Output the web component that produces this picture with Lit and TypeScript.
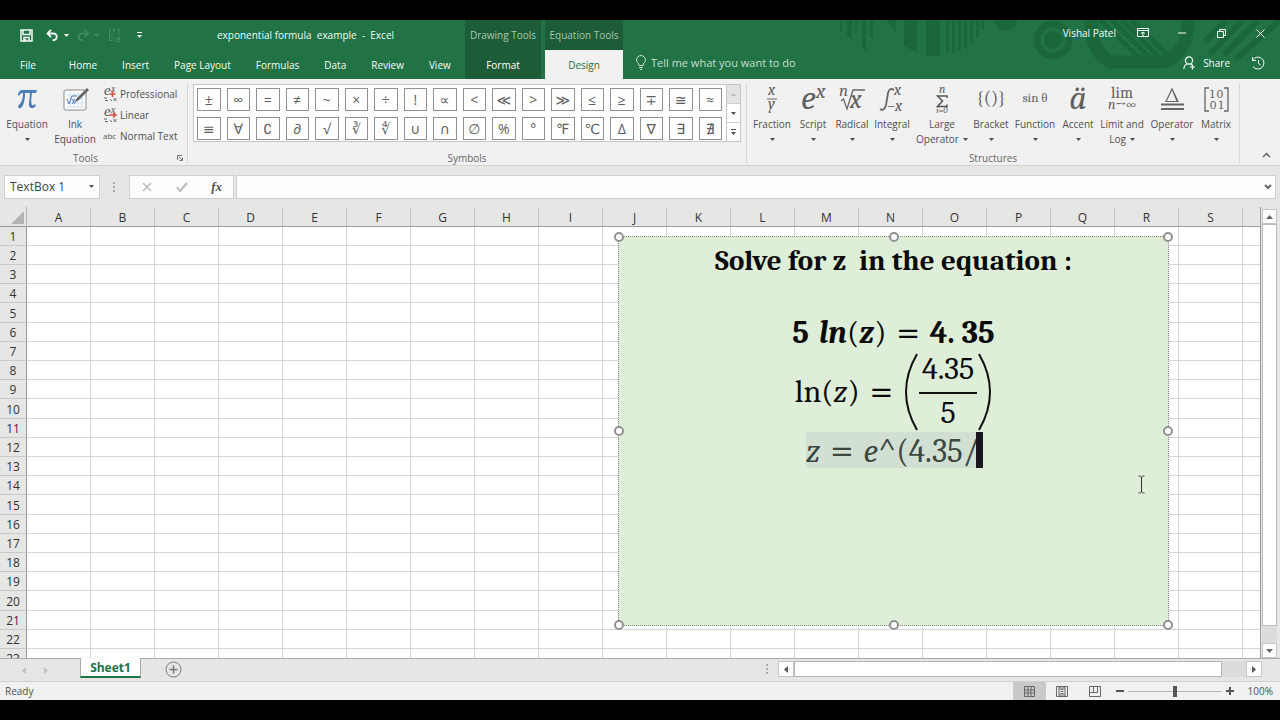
import { LitElement, html, svg, css } from "lit";
import { customElement } from "lit/decorators.js";

const SYMBOLS = [
  "±", "∞", "=", "≠", "~", "×", "÷", "!", "∝", "<", "≪", ">", "≫", "≤", "≥", "∓", "≅", "≈",
  "≡", "∀", "∁", "∂", "√", "∛", "∜", "∪", "∩", "∅", "%", "°", "℉", "℃", "∆", "∇", "∃", "∄",
];
const COLUMNS = "ABCDEFGHIJKLMNOPQRS".split("");
const ROWS = Array.from({ length: 23 }, (_, i) => i + 1);
const TABS = ["Home", "Insert", "Page Layout", "Formulas", "Data", "Review", "View"];

const down = html`<svg class="caret" width="5" height="3" viewBox="0 0 5 3" aria-hidden="true"><path d="M0 0h5L2.500 3z" fill="currentColor" /></svg>`;

@customElement("title-area")
export class TitleArea extends LitElement {
  static styles = css`
    :host { display: flex; position: relative; height: 59px; background: #217346; color: #f3faf5; overflow: hidden; }
    button, a { font: inherit; color: inherit; background: none; border: 0; padding: 0; text-decoration: none; display: flex; align-items: center; }
    .pattern { position: absolute; right: 0; top: 0; }
    .left { width: 465px; display: flex; flex-direction: column; }
    .row { display: flex; align-items: center; height: 30px; }
    .quick { width: 217px; padding-left: 20px; box-sizing: border-box; gap: 8px; }
    .save { margin-right: 5px; }
    .custom { margin-left: 7px; }
    .dim { color: #468b64; }
    .title { white-space: pre; }
    .tabs { height: 29px; gap: 25px; padding-left: 20px; white-space: nowrap; }
    .file { margin-right: 8px; }
    .context { display: flex; flex-direction: column; width: 76px; margin-right: 4px; background: #1d5c38; }
    .equation { width: 78px; margin-right: 0; }
    .caption { height: 30px; line-height: 30px; text-align: center; color: #a5c9b3; white-space: nowrap; }
    .tab { flex: 1; justify-content: center; color: #fff; }
    .active { background: #f1f1f1; color: #217346; }
    .right { flex: 1; display: flex; flex-direction: column; position: relative; }
    .end { justify-content: flex-end; height: 27px; }
    .user { margin-right: 21px; }
    .win { width: 12px; justify-content: center; margin-right: 27px; }
    .last { margin-right: 14px; }
    .second { display: flex; align-items: center; height: 34px; padding-left: 12px; }
    .tell { gap: 4px; font-size: 11px; color: #c4dfcf; }
    .share { margin-left: auto; gap: 7px; margin-right: 21px; }
    .history { margin-right: 15px; }
  `;
  render() {
    return html`
      <svg class="pattern" width="440" height="59" viewBox="0 0 440 59" aria-hidden="true">
        <g fill="#1b663b">
          <path d="M0 0h2v12h-2zM7 0h5v20l-5-4zM15 0h2v14h-2zM22 0h4v31l-4-3zM30 0h3v18h-3zM47 0h9v13z" />
          <path d="M64 0h13v32l-13-6zM86 0h14v36h-14z" />
          <path d="M106 0h3v34h-3zM112 0h3v33h-3zM118 0h3v31h-3zM124 0h3v28h-3zM130 0h3v24h-3zM136 0h3v18h-3zM142 0h2v10h-2z" />
          <circle cx="166" cy="0" r="11" /><circle cx="213" cy="20" r="9" />
        </g>
        <g fill="none" stroke="#1b663b">
          <circle cx="213" cy="20" r="16" stroke-width="7" />
          <path d="M251 0C250 22 259 36 270 42H325C342 34 349 20 348 0" stroke-width="13" />
          <path d="M260 0L304 42M272 0L314 42M282 0L324 42M291 0L333 40" stroke-width="5" />
          <path d="M386 0L365 22M403 0L370 34M418 0L384 35M440 0L395 40" stroke-width="6" />
        </g>
      </svg>
      <div class="left">
        <div class="row">
          <div class="row quick">
            <button class="save" aria-label="Save"><svg width="13" height="13" viewBox="0 0 13 13" fill="none" stroke="currentColor" stroke-width="1.500"><path d="M1 1h11v11H1zM3 1v4.500h7V1M4 12V8.500h5V12M5.500 12v-2" /></svg></button>
            <button aria-label="Undo"><svg width="23" height="13" viewBox="0 0 23 13"><path d="M1.500 4.500H7.500a3.300 3.300 0 0 1 0 6.600H6.500M5 .8L1.500 4.500 5 8.200" fill="none" stroke="currentColor" stroke-width="1.800" /><path d="M18 5h5l-2.500 3z" fill="currentColor" /></svg></button>
            <button class="dim" aria-label="Redo"><svg width="23" height="13" viewBox="0 0 23 13"><path d="M11 4.500H5a3.300 3.300 0 0 0 0 6.600H6M7.500.8L11 4.500 7.500 8.200" fill="none" stroke="currentColor" stroke-width="1.600" /><path d="M17 5h5l-2.500 3z" fill="currentColor" /></svg></button>
            <button class="dim" aria-label="Calculate"><svg width="14" height="15" viewBox="0 0 14 15" fill="none" stroke="currentColor"><path d="M4 12.500H1.500V1.500H3M5 3V1h2v2zM9 1.500h2V7M4 5v5M6 9.500v4M8.500 9.500h3v2h-3v2h3.500" /></svg></button>
            <button class="custom" aria-label="Customize toolbar"><svg width="5" height="6" viewBox="0 0 5 6" fill="currentColor"><path d="M0 0h5v1H0zM0 3h5L2.500 6z" /></svg></button>
          </div>
          <div class="title">exponential formula  example  -  Excel</div>
        </div>
        <nav class="row tabs"><a class="file" href="#file">File</a>${TABS.map((t) => html`<a href="#${t}">${t}</a>`)}</nav>
      </div>
      <div class="context"><div class="caption">Drawing Tools</div><a class="tab" href="#format">Format</a></div>
      <div class="context equation"><div class="caption">Equation Tools</div><a class="tab active" href="#design">Design</a></div>
      <div class="right">
        <div class="row end">
          <span class="user">Vishal Patel</span>
          <button class="win" aria-label="Ribbon options"><svg width="12" height="10" viewBox="0 0 12 10" fill="none" stroke="currentColor"><path d="M.5.5h11v8H.5zM.5 2.500h11M6 8V4M4 5.500L6 4l2 1.500" /></svg></button>
          <button class="win" aria-label="Minimize"><svg width="8" height="2"><path d="M0 1h8" stroke="currentColor" /></svg></button>
          <button class="win" aria-label="Restore"><svg width="9" height="9" viewBox="0 0 9 9" fill="none" stroke="currentColor"><path d="M.5 2.500h6v6h-6zM2.500 2.500v-2h6v6h-2" /></svg></button>
          <button class="win last" aria-label="Close"><svg width="9" height="9" viewBox="0 0 9 9"><path d="M.5.5l8 8M8.500.5l-8 8" stroke="currentColor" /></svg></button>
        </div>
        <div class="second">
          <button class="tell"><svg width="12" height="15" viewBox="0 0 12 15" fill="none" stroke="currentColor"><path d="M4 10.500C4 8 1.500 7.500 1.500 5a4.500 4.500 0 0 1 9 0C10.500 7.500 8 8 8 10.500zM4 12.500h4M5 14.500h2" /></svg>Tell me what you want to do</button>
          <button class="share"><svg width="13" height="14" viewBox="0 0 13 14" fill="none" stroke="currentColor" stroke-width="1.200"><circle cx="6" cy="4.500" r="3.600" /><path d="M.8 13c.3-3 2-5 4-5M7 8c1 0 1.500.5 2 1M9.500 8.500v5M7 11h5" /></svg>Share</button>
          <button class="history" aria-label="History"><svg width="14" height="14" viewBox="0 0 14 14" fill="none" stroke="currentColor"><path d="M1.500 4.500A6 6 0 1 1 2 10.500M1.500 1v3.500H5M7.500 4v3.500L9.500 9" /></svg></button>
        </div>
      </div>`;
  }
}

const STRUCTURES: { label: string; width: number; second?: string; icon: unknown }[] = [
  { label: "Fraction", width: 44, icon: svg`<text x="16" y="11" font-size="16">x</text><path d="M15 15h10" stroke="#666" /><text x="16" y="25" font-size="16">y</text>` },
  { label: "Script", width: 38, icon: svg`<text x="8" y="25" font-size="34">e</text><text x="23" y="14" font-size="21">x</text>` },
  { label: "Radical", width: 40, icon: svg`<text x="7" y="12" font-size="17">n</text><path d="M9 17l2.500-2 3.500 10L21 6h12" fill="none" stroke="#666" stroke-width="1.300" /><text x="18" y="24" font-size="26">x</text>` },
  { label: "Integral", width: 40, icon: svg`<path d="M8 25c3 2 5 0 6-4l2-12c1-4 3-5 6-3" fill="none" stroke="#666" stroke-width="1.800" /><text x="22" y="11" font-size="16">x</text><text x="15" y="27" font-size="16">−x</text>` },
  { label: "Large", second: "Operator", width: 60, icon: svg`<text x="17" y="9" font-size="12">n</text><path d="M25 14v-2H15.500l5 5-5 5.500H25v-2" fill="none" stroke="#555" stroke-width="1.500" /><text x="20" y="29" font-size="9" text-anchor="middle">i=0</text>` },
  { label: "Bracket", width: 38, icon: svg`<text class="up" x="20" y="20" font-size="19" text-anchor="middle">{()}</text>` },
  { label: "Function", width: 50, icon: svg`<text class="up" x="20" y="18" font-size="13" text-anchor="middle">sin θ</text>` },
  { label: "Accent", width: 36, icon: svg`<text x="20" y="25" font-size="34" text-anchor="middle">ä</text>` },
  { label: "Limit and", second: "Log", width: 52, icon: svg`<text class="up" x="20" y="14" font-size="16" text-anchor="middle">lim</text><text x="20" y="25" font-size="14" text-anchor="middle">n→∞</text>` },
  { label: "Operator", width: 48, icon: svg`<path d="M14 17.500L20 5l6 12.500zM20 5l5 12" fill="none" stroke="#666" stroke-width="1.200" /><path d="M9 20.500h23M9 25h23" stroke="#666" stroke-width="2" />` },
  { label: "Matrix", width: 40, icon: svg`<path d="M13 4H9v23h4M28 4h4v23h-4" fill="none" stroke="#666" stroke-width="1.300" /><text class="up" x="20.500" y="14" font-size="12" text-anchor="middle">1 0</text><text class="up" x="20.500" y="25" font-size="12" text-anchor="middle">0 1</text>` },
];

@customElement("ribbon-area")
export class RibbonArea extends LitElement {
  static styles = css`
    :host { display: flex; height: 86px; background: #f1f1f1; border-bottom: 1px solid #d4d4d2; color: #505050; }
    button { font: inherit; color: inherit; background: none; border: 0; padding: 0; }
    .group { display: flex; flex-direction: column; border-right: 1px solid #dadada; margin-top: 4px; height: 81px; box-sizing: border-box; position: relative; }
    .body { display: flex; height: 67px; }
    .name { text-align: center; line-height: 16px; height: 14px; color: #666; }
    .tools { width: 188px; }
    .tools .name { padding-right: 16px; }
    .launcher { position: absolute; right: 4px; bottom: 3px; display: flex; }
    .big { display: flex; flex-direction: column; align-items: center; line-height: 15px; white-space: nowrap; flex: none; }
    .art { height: 34px; width: 40px; padding-top: 1px; box-sizing: border-box; display: block; overflow: visible; }
    .big text { font-family: Cambria, "Liberation Serif", serif; font-style: italic; fill: #606060; }
    .big .up { font-style: normal; }
    .line { height: 15px; display: flex; align-items: center; justify-content: center; gap: 4px; }
    .lone { width: 54px; }
    .ink { width: 42px; }
    .small { display: flex; flex-direction: column; margin-left: 7px; }
    .small button { display: flex; align-items: center; height: 21px; gap: 3px; white-space: nowrap; }
    .small svg { overflow: visible; }
    .small text { font-family: "Liberation Serif", serif; font-style: italic; fill: #555; }
    .small .abc { font-family: "Open Sans", sans-serif; font-style: normal; }
    .symbols { width: 559px; }
    .gallery { flex: 1; display: flex; margin: 1px 5px 0 5px; height: 58px; border: 1px solid #c6c6c6; background: #fff; box-sizing: border-box; }
    .cells { flex: 1; display: grid; grid-template-columns: repeat(18, 1fr); gap: 6px; padding: 3px 4px 3px 3px; }
    .cells button { border: 1px solid #919191; color: #606060; font: 14px/20px "Open Sans", "DejaVu Sans", sans-serif; height: 23px; min-width: 0; text-align: center; }
    .scroll { width: 13px; display: flex; flex-direction: column; border-left: 1px solid #c6c6c6; }
    .scroll button { flex: 1; display: flex; align-items: center; justify-content: center; border-bottom: 1px solid #d0d0d0; }
    .scroll button:first-child { background: #e3e3e3; color: #bbb; }
    .scroll button:last-child { border-bottom: 0; }
    .structures { width: 493px; }
    .structures .body { padding-left: 3px; }
    .collapse { margin-left: auto; align-self: flex-end; padding: 0 9px 3px 0; }
  `;
  render() {
    const small = (red: string) => html`<svg width="14" height="16" viewBox="0 0 14 16"><text x="1" y="9" font-size="15">e</text><text x="8" y="6" font-size="10">x</text><path d="M1 12h3M2 14.500h3M7 13l2 2M10.500 12l3 3M13.500 12l-3 3" stroke="#666" fill="none" /><path d=${red} stroke="#d64f45" stroke-width="1.500" fill="none" /></svg>`;
    return html`
      <section class="group tools">
        <div class="body">
          <button class="big lone"><svg class="art" viewBox="0 0 40 33"><path d="M11 11c1-5 3-5 5-5h14l-1 3h-4c-1 6-1 10 0 12 1 1 2 0 3-1l1 1c-2 5-8 4-7-2l1-10h-5c0 7-1 12-4 15-2 1-4-1-2-3 3-3 4-7 4-12-2 0-3 1-4 3z" fill="#4b7fb8" /></svg><span class="line">Equation</span><span class="line">${down}</span></button>
          <button class="big ink"><svg class="art" viewBox="0 0 40 33"><rect x="9" y="6" width="22" height="20" rx="2" fill="#fff" stroke="#888" /><path d="M12 11h17M12 15h17M12 19h17M12 23h17M15 8v16M19 8v16M23 8v16M27 8v16" stroke="#cfdfec" /><path d="M12 15l2 5 3-8h5M17 15l3 5M20 15l-3 5" fill="none" stroke="#4b7fb8" /><path d="M19 19l3-5L32 4l2 2-10 10z" fill="#666" /></svg><span class="line">Ink</span><span class="line">Equation</span></button>
          <div class="small">
            <button>${small("M6.500 8h6M9.500 5v6")}Professional</button>
            <button>${small("M6 8h7M10 5.500l3 2.500-3 2.500")}Linear</button>
            <button><svg width="14" height="12" viewBox="0 0 14 12"><text class="abc" x="0" y="9" font-size="8">abc</text></svg>Normal Text</button>
          </div>
        </div>
        <div class="name">Tools</div>
        <button class="launcher" aria-label="Tools options"><svg width="6" height="6" viewBox="0 0 6 6" fill="none" stroke="#777"><path d="M.5 5V.5H5M2 2l3 3M5.500 2.500v3h-3" /></svg></button>
      </section>
      <section class="group symbols">
        <div class="body"><div class="gallery">
          <div class="cells">${SYMBOLS.map((s) => html`<button>${s}</button>`)}</div>
          <div class="scroll">
            <button aria-label="Up"><svg width="5" height="3"><path d="M0 3h5L2.500 0z" fill="currentColor" /></svg></button>
            <button aria-label="Down">${down}</button>
            <button aria-label="More"><svg width="5" height="6"><path d="M0 0h5v1H0zM0 3h5L2.500 6z" fill="currentColor" /></svg></button>
          </div>
        </div></div>
        <div class="name">Symbols</div>
      </section>
      <section class="group structures">
        <div class="body">${STRUCTURES.map((s) => html`
          <button class="big" style="width:${s.width}px"><svg class="art" viewBox="0 0 40 33">${s.icon}</svg><span class="line">${s.label}</span><span class="line">${s.second ?? ""}${down}</span></button>`)}
        </div>
        <div class="name">Structures</div>
      </section>
      <button class="collapse" aria-label="Collapse ribbon"><svg width="9" height="6" viewBox="0 0 9 6"><path d="M1 5l3.500-3.500L8 5" fill="none" stroke="#666" stroke-width="1.500" /></svg></button>`;
  }
}

@customElement("formula-bar")
export class FormulaBar extends LitElement {
  static styles = css`
    :host { display: flex; align-items: center; height: 41px; padding: 0 4px; background: #e6e6e4; }
    .box { height: 24px; box-sizing: border-box; background: #fdfdfd; border: 1px solid #cfcfcd; display: flex; align-items: center; }
    .name { width: 96px; padding: 0 5px; }
    input { border: 0; background: none; padding: 0; min-width: 0; flex: 1; font: inherit; color: #444; outline: 0; }
    button { border: 0; background: none; padding: 0; display: flex; color: #555; }
    .dots { margin: 0 13px 0 13px; }
    .actions { width: 105px; justify-content: space-between; padding: 0 11px 0 12px; margin-right: 2px; }
    .formula { flex: 1; padding: 0 3px; }
    .fx { font: italic bold 13px/16px "Liberation Serif", serif; }
  `;
  render() {
    return html`
      <div class="box name"><input aria-label="Name box" value="TextBox 1" /><button aria-label="Names">${down}</button></div>
      <svg class="dots" width="3" height="12" fill="#aaa"><path d="M0 1h2v2H0zM0 5h2v2H0zM0 9h2v2H0z" /></svg>
      <div class="box actions">
        <button aria-label="Cancel"><svg width="10" height="10"><path d="M1 1l8 8M9 1L1 9" stroke="#bbb" stroke-width="1.500" /></svg></button>
        <button aria-label="Enter"><svg width="12" height="10"><path d="M1 5l3 4 7-8" fill="none" stroke="#bbb" stroke-width="2" /></svg></button>
        <button class="fx" aria-label="Insert function">fx</button>
      </div>
      <div class="box formula"><input aria-label="Formula" /><button aria-label="Expand"><svg width="8" height="6"><path d="M1 1l3 3 3-3" fill="none" stroke="#666" stroke-width="2" /></svg></button></div>`;
  }
}

@customElement("equation-box")
export class EquationBox extends LitElement {
  static styles = css`
    :host { display: block; box-sizing: border-box; background: #dfeed9; border: 1px dotted #8a8a8a; padding-top: 6px; font: 32px/36px Cambria, "Liberation Serif", serif; color: #0a0a0a; }
    .title, .line { height: 36px; white-space: pre; text-align: center; }
    .title { font-size: 29px; font-weight: bold; margin-bottom: 36px; }
    .math { display: flex; justify-content: center; align-items: center; gap: 10px; }
    .light { font-weight: normal; }
    .eq { font-size: 42px; font-weight: normal; }
    .middle { height: 81px; }
    .quotient { display: flex; align-items: center; gap: 1px; margin-left: 1px; }
    .fraction { display: flex; flex-direction: column; align-items: center; margin-top: 2px; }
    .over { border-bottom: 2px solid #111; padding: 0 3px; height: 42px; line-height: 34px; box-sizing: border-box; }
    .under { height: 40px; line-height: 38px; }
    .selected { display: inline-flex; gap: 10px; background: #d2e0d3; color: #3c473e; height: 36px; line-height: 38px; font-size: 33px; margin-left: 2px; vertical-align: top; }
    .mark { background: #1b1520; width: 7px; margin-left: -13px; }
    .handle { position: absolute; width: 10px; height: 10px; box-sizing: border-box; border: 2px solid #929292; border-radius: 50%; background: #fff; transform: translate(-50%, -50%); }
    .n { top: 0; } .s { top: 100%; } .m { top: 50%; }
    .w { left: 0; } .e { left: 100%; } .c { left: 50%; }
  `;
  render() {
    return html`
      <div class="title">Solve for z  in the equation :</div>
      <div class="line math"><b>5</b><span><b><i>ln</i></b>(<b><i>z</i></b>)</span><span class="eq">=</span><b>4. 35</b></div>
      <div class="middle math">
        <span>ln(<i>z</i>)</span><span class="eq">=</span>
        <span class="quotient">
          <svg width="14" height="78" viewBox="0 0 14 78"><path d="M13 1Q-9 39 13 77" fill="none" stroke="#111" stroke-width="2" /></svg>
          <span class="fraction"><span class="over">4.35</span><span class="under">5</span></span>
          <svg width="14" height="78" viewBox="0 0 14 78"><path d="M1 1Q23 39 1 77" fill="none" stroke="#111" stroke-width="2" /></svg>
        </span>
      </div>
      <div class="line"><span class="selected"><i>z</i><span class="eq">=</span><span><i>e</i>^(4.35/</span><span class="mark"></span></span></div>
      ${["n w", "n c", "n e", "m w", "m e", "s w", "s c", "s e"].map((p) => html`<span class="handle ${p}"></span>`)}`;
  }
}

@customElement("sheet-area")
export class SheetArea extends LitElement {
  static styles = css`
    :host { display: flex; position: relative; height: 451px; background: #e6e6e4; overflow: hidden; }
    .view { flex: 1; overflow: hidden; border-right: 1px solid #9b9b9b; background: #fff; }
    table { width: 100%; table-layout: fixed; border-collapse: separate; border-spacing: 0; }
    th { font-weight: normal; font-size: 12px; line-height: 16px; color: #333; background: #e6e6e4; padding: 2px 0 0; box-sizing: border-box; }
    thead th { width: 64px; height: 20px; border-right: 1px solid #c4c4c2; border-bottom: 1px solid #9b9b9b; }
    thead th:last-child { width: auto; border-right: 0; }
    thead .corner { width: 27px; border-right-color: #b4b4b4; }
    .corner svg { display: block; margin-left: 11px; }
    tbody th { height: 19px; border-right: 1px solid #9b9b9b; border-bottom: 1px solid #c9c9c7; }
    td { padding: 0; border-right: 1px solid #d6d6d6; border-bottom: 1px solid #d6d6d6; }
    td:last-child { border-right: 0; }
    tbody tr:nth-child(5n) th { height: 20px; }
    .bar { width: 15px; display: flex; flex-direction: column; margin: 2px 3px 0 1px; background: #dcdcdc; }
    .bar button { height: 15px; padding: 0; background: #fff; border: 1px solid #c4c4c4; display: flex; align-items: center; justify-content: center; }
    .thumb { height: 402px; background: #fff; border: 1px solid #bbb; box-sizing: border-box; margin-bottom: auto; }
    equation-box { position: absolute; left: 618px; top: 29px; width: 551px; height: 390px; }
    .pointer { position: absolute; left: 1137px; top: 268px; }
  `;
  render() {
    return html`
      <div class="view"><table>
        <thead><tr><th class="corner"><svg width="13" height="13"><path d="M13 0v13H0z" fill="#b4b4b4" /></svg></th>${COLUMNS.map((c) => html`<th scope="col">${c}</th>`)}<th></th></tr></thead>
        <tbody>${ROWS.map((r) => html`<tr><th scope="row">${r}</th>${COLUMNS.map(() => html`<td></td>`)}<td></td></tr>`)}</tbody>
      </table></div>
      <div class="bar">
        <button aria-label="Scroll up"><svg width="7" height="4"><path d="M0 4h7L3.500 0z" fill="#666" /></svg></button>
        <div class="thumb"></div>
        <button aria-label="Scroll down"><svg width="7" height="4"><path d="M0 0h7L3.500 4z" fill="#666" /></svg></button>
      </div>
      <equation-box></equation-box>
      <svg class="pointer" width="9" height="19" viewBox="0 0 9 19"><path d="M1.500 1C3 1 4.500 1 4.500 3v13c0 2-1.500 2-3 2M7.500 1c-1.500 0-3 0-3 2v13c0 2 1.500 2 3 2" fill="none" stroke="#333" /></svg>`;
  }
}

@customElement("sheet-footer")
export class SheetFooter extends LitElement {
  static styles = css`
    :host { display: block; color: #505050; }
    button { border: 0; background: none; padding: 0; color: inherit; font: inherit; display: flex; align-items: center; justify-content: center; }
    .tabs { display: flex; height: 24px; box-sizing: border-box; background: #e6e6e4; border-top: 1px solid #ababab; border-bottom: 1px solid #cfcfcf; }
    .nav { display: flex; gap: 18px; padding: 0 32px 0 22px; color: #c0c0c0; width: 80px; box-sizing: border-box; }
    .sheet { width: 61px; height: 20px; margin-top: -1px; background: #fff; color: #217346; font-weight: bold; font-size: 12px; border-right: 1px solid #ababab; border-left: 1px solid #ababab; border-bottom: 2px solid #217346; box-sizing: border-box; padding-top: 2px; }
    .add { margin-left: 24px; height: 20px; }
    .dots { margin: 4px 10px 0 auto; }
    .scroll { width: 484px; display: flex; height: 16px; margin: 2px 18px 0 0; background: #dcdcdc; }
    .scroll button { width: 16px; background: #fff; border: 1px solid #c4c4c4; }
    .thumb { width: 428px; margin-right: auto; background: #fff; border: 1px solid #b5b5b5; box-sizing: border-box; }
    .status { display: flex; align-items: center; height: 18px; background: #f1f1f1; padding: 0 7px 0 5px; }
    .ready { margin-right: auto; }
    .mode { width: 33px; height: 18px; }
    .on { background: #c9c9c9; }
    .step { width: 10px; }
    .minus { margin-left: 3px; }
    input { appearance: none; width: 94px; height: 12px; margin: 0 3px; background: linear-gradient(#b5b5b5, #b5b5b5) center / 100% 1px no-repeat; }
    input::-webkit-slider-thumb { appearance: none; width: 4px; height: 11px; background: #555; }
    .percent { margin-left: 13px; }
  `;
  render() {
    return html`
      <div class="tabs">
        <div class="nav"><button aria-label="Previous sheet"><svg width="4" height="7"><path d="M4 0v7L0 3.500z" fill="currentColor" /></svg></button><button aria-label="Next sheet"><svg width="4" height="7"><path d="M0 0v7l4-3.500z" fill="currentColor" /></svg></button></div>
        <button class="sheet">Sheet1</button>
        <button class="add" aria-label="New sheet"><svg width="17" height="17" viewBox="0 0 17 17" fill="none" stroke="#777"><circle cx="8.500" cy="8.500" r="7.500" /><path d="M4.500 8.500h8M8.500 4.500v8" stroke-width="1.500" /></svg></button>
        <svg class="dots" width="2" height="12" fill="#aaa"><path d="M0 1h2v2H0zM0 5h2v2H0zM0 9h2v2H0z" /></svg>
        <div class="scroll">
          <button aria-label="Scroll left"><svg width="4" height="7"><path d="M4 0v7L0 3.500z" fill="#555" /></svg></button>
          <div class="thumb"></div>
          <button aria-label="Scroll right"><svg width="4" height="7"><path d="M0 0v7l4-3.500z" fill="#555" /></svg></button>
        </div>
      </div>
      <div class="status">
        <span class="ready">Ready</span>
        <button class="mode on" aria-label="Normal view"><svg width="11" height="11" viewBox="0 0 11 11" fill="none" stroke="#666"><path d="M.5.5h10v10H.5zM4 0v11M7 0v11M0 4h11M0 7h11" /></svg></button>
        <button class="mode" aria-label="Page layout view"><svg width="12" height="11" viewBox="0 0 12 11" fill="none" stroke="#666"><path d="M.5.5h11v10H.5zM3 .5v10M9 .5v10M4.500 3.500h3M4.500 5.500h3M4.500 7.500h3M3 2h6M3 9h6" /></svg></button>
        <button class="mode" aria-label="Page break preview"><svg width="12" height="11" viewBox="0 0 12 11" fill="none" stroke="#666"><path d="M.5.5h11v10H.5zM.5 6.500h8v-6M4.500.5v6" /></svg></button>
        <button class="step minus" aria-label="Zoom out"><svg width="8" height="2"><path d="M0 1h8" stroke="#555" stroke-width="2" /></svg></button>
        <input type="range" min="0" max="200" value="100" aria-label="Zoom" />
        <button class="step" aria-label="Zoom in"><svg width="8" height="8"><path d="M0 4h8M4 0v8" stroke="#555" stroke-width="2" /></svg></button>
        <span class="percent">100%</span>
      </div>`;
  }
}

@customElement("app-root")
export class AppRoot extends LitElement {
  static styles = css`
    :host { display: flex; flex-direction: column; background: #000; padding: 20px 0; font: 10px/16px "Open Sans", "Noto Sans", sans-serif; overflow: hidden; }
    formula-bar { font-size: 12px; }
  `;
  render() {
    return html`<title-area></title-area><ribbon-area></ribbon-area><formula-bar></formula-bar><sheet-area></sheet-area><sheet-footer></sheet-footer>`;
  }
}
